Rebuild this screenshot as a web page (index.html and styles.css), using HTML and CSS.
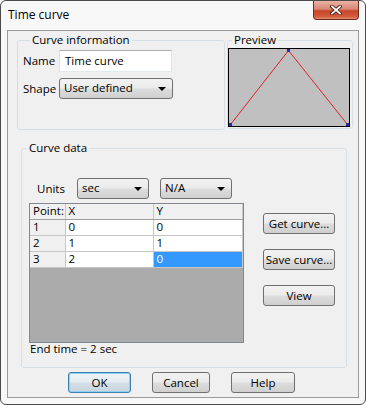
FILE: index.html
```html
<!DOCTYPE html>
<html lang="en">
<head>
    <meta charset="UTF-8">
    <meta name="viewport" content="width=device-width, initial-scale=1.0">
    <title>Time curve</title>
    <link rel="stylesheet" href="styles.css">
</head>
<body>
    <div class="window">
        <div class="titlebar">
            <span class="title">Time curve</span>
            <div class="close">
                <svg width="12" height="10" viewBox="0 0 12 10">
                    <path d="M2 1.5 L10 8.5 M10 1.5 L2 8.5" stroke="#4a1c12" stroke-width="3.6" stroke-linecap="square"/>
                    <path d="M2 1.5 L10 8.5 M10 1.5 L2 8.5" stroke="#fff" stroke-width="1.8" stroke-linecap="square"/>
                </svg>
            </div>
        </div>

        <div class="client">
            <div class="top-row">
                <fieldset class="group info">
                    <legend>Curve information</legend>
                    <div class="field">
                        <label>Name</label>
                        <div class="textbox">Time curve</div>
                    </div>
                    <div class="field shape">
                        <label>Shape</label>
                        <div class="combo wide">User defined<span class="arrow"></span></div>
                    </div>
                </fieldset>

                <fieldset class="group preview">
                    <legend>Preview</legend>
                    <svg class="plot" width="122" height="79" viewBox="0 0 122 79">
                        <rect x="0.5" y="0.5" width="121" height="78" fill="#c0c0c0" stroke="#000"/>
                        <polyline points="2.5,76.5 60.5,2.5 119.5,76.5" fill="none" stroke="#e0202a" stroke-width="1"/>
                        <rect x="1" y="75" width="3" height="3" fill="#2a2aa8"/>
                        <rect x="59" y="1" width="3" height="3" fill="#2a2aa8"/>
                        <rect x="118" y="75" width="3" height="3" fill="#2a2aa8"/>
                    </svg>
                </fieldset>
            </div>

            <fieldset class="group data">
                <legend>Curve data</legend>
                <div class="units">
                    <label>Units</label>
                    <div class="combo small">sec<span class="arrow"></span></div>
                    <div class="combo small">N/A<span class="arrow"></span></div>
                </div>
                <div class="data-body">
                    <div class="grid-col">
                        <div class="grid">
                            <table>
                                <tr class="head"><td class="c-point">Point:</td><td class="c-x">X</td><td class="c-y">Y</td></tr>
                                <tr><td class="c-point">1</td><td>0</td><td>0</td></tr>
                                <tr><td class="c-point">2</td><td>1</td><td>1</td></tr>
                                <tr><td class="c-point">3</td><td>2</td><td class="selected">0</td></tr>
                            </table>
                        </div>
                        <div class="end-time">End time = 2 sec</div>
                    </div>
                    <div class="side-buttons">
                        <div class="btn">Get curve...</div>
                        <div class="btn">Save curve...</div>
                        <div class="btn">View</div>
                    </div>
                </div>
            </fieldset>

            <div class="dialog-buttons">
                <div class="btn default ok">OK</div>
                <div class="btn cancel">Cancel</div>
                <div class="btn help">Help</div>
            </div>
        </div>
    </div>
</body>
</html>
```

FILE: styles.css
```css
* {
box-sizing: border-box;
}

html, body {
margin: 0;
background: #fff;
}

body {
font-family: "Open Sans", "Noto Sans", sans-serif;
font-size: 11.5px;
line-height: 16px;
color: #000;
}

.window {
width: 366px;
height: 405px;
border: 1px solid #4b4b4b;
border-radius: 6px;
background: #f8f8f8;
padding: 0 6px 6px 6px;
display: flex;
flex-direction: column;
overflow: hidden;
}

.titlebar {
height: 29px;
display: flex;
justify-content: space-between;
align-items: flex-start;
}

.title {
padding: 6px 0 0 1px;
font-size: 12px;
}

.close {
width: 46px;
height: 19px;
border: 1px solid #6e2c20;
border-top: none;
border-radius: 0 0 4px 4px;
background: linear-gradient(#eab2a5 0%, #d98672 45%, #c8452c 55%, #d2593c 85%, #e88a6a 100%);
display: flex;
align-items: center;
justify-content: center;
}

.client {
flex: 1;
border: 1px solid #9a9a9a;
background: #f0f0f0;
display: flex;
flex-direction: column;
}

/* group boxes */
.group {
margin: 0;
padding: 0;
border: 1px solid #d5dfe5;
border-radius: 3px;
min-width: 0;
}

.group legend {
padding: 0 2px;
line-height: 16px;
}

.top-row {
display: flex;
margin-top: 1px;
}

.info {
margin-left: 9px;
width: 208px;
height: 98px;
padding: 2px 0 0 5px;
}

.info legend {
margin-left: 7px;
}

.field {
display: flex;
align-items: center;
}

.field label {
width: 36px;
}

.field.shape {
margin-top: 6px;
}

.textbox {
width: 113px;
height: 22px;
border: 1px solid #abadb3;
border-color: #abadb3 #e2e3ea #e3e9ef #dbdfe6;
background: #fff;
padding: 2px 0 0 5px;
}

.preview {
margin-left: 2px;
width: 126px;
height: 97px;
}

.preview legend {
margin-left: 4px;
}

.plot {
display: block;
}

/* combo boxes and buttons */
.combo, .btn {
border: 1px solid #707070;
border-radius: 3px;
background: linear-gradient(#f2f2f2 0%, #ebebeb 48%, #dddddd 52%, #cfcfcf 100%);
height: 21px;
}

.combo {
position: relative;
padding: 1px 0 0 4px;
}

.combo.wide {
width: 114px;
}

.combo.small {
width: 72px;
}

.arrow {
position: absolute;
right: 6px;
top: 8px;
border-left: 4px solid transparent;
border-right: 4px solid transparent;
border-top: 4px solid #000;
}

.btn {
display: flex;
align-items: center;
justify-content: center;
}

/* curve data */
.data {
margin: 10px 0 0 13px;
width: 326px;
height: 228px;
padding: 0;
}

.data legend {
margin-left: 5px;
}

.units {
display: flex;
align-items: center;
margin-top: 22px;
padding-left: 15px;
}

.units label {
width: 40px;
}

.units .combo + .combo {
margin-left: 11px;
}

.data-body {
display: flex;
margin-top: 4px;
}

.grid-col {
margin-left: 7px;
}

.grid {
width: 215px;
height: 140px;
border: 1px solid #828790;
background: #ababab;
}

.grid table {
border-collapse: collapse;
width: 213px;
table-layout: fixed;
}

.grid td {
height: 16px;
padding: 0 0 0 3px;
line-height: 14px;
background: #fff;
border-right: 1px solid #c6c6c6;
border-bottom: 1px solid #c6c6c6;
white-space: nowrap;
overflow: hidden;
}

.grid td.c-point {
width: 35px;
background: #f0f0f0;
}

.grid td.c-x {
width: 88px;
}

.grid .head td {
background: #f0f0f0;
border-bottom-color: #a0a0a0;
height: 15px;
}

.grid td.selected {
background: #3399ff;
color: #fff;
}

.end-time {
margin-top: -1px;
padding-left: 1px;
line-height: 14px;
}

.side-buttons {
display: flex;
flex-direction: column;
gap: 15px;
margin: 10px 0 0 19px;
}

.side-buttons .btn {
width: 72px;
}

/* dialog buttons */
.dialog-buttons {
display: flex;
gap: 21px;
margin: 4px 0 0 60px;
}

.btn.ok {
width: 63px;
}

.btn.cancel {
width: 58px;
}

.btn.help {
width: 64px;
}

.btn.default {
border-color: #3c7fb1;
box-shadow: inset 0 0 0 1px #8fd0f2;
background: linear-gradient(#eef4f8 0%, #e4ecf1 48%, #d4dfe6 52%, #c8d5dd 100%);
}
```
